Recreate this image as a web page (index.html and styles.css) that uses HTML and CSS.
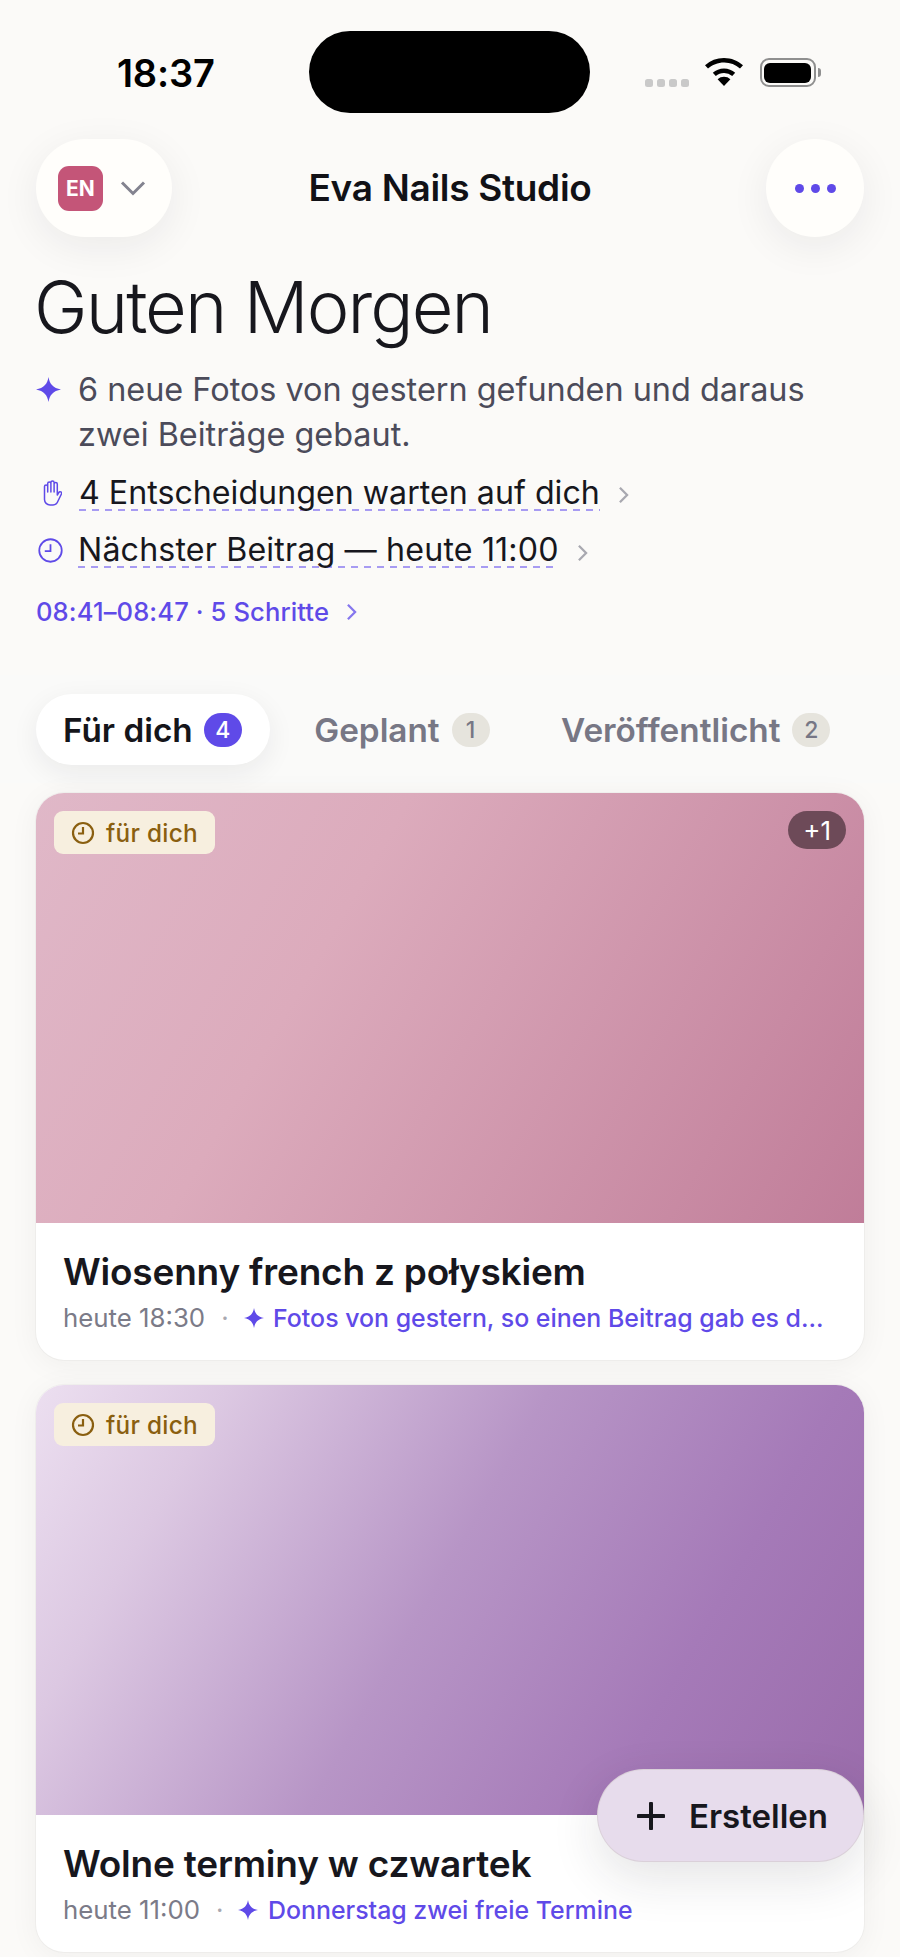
FILE: index.html
```html
<!DOCTYPE html>
<html lang="de">
<head>
<meta charset="utf-8">
<title>Eva Nails Studio</title>
<link rel="stylesheet" href="styles.css">
</head>
<body>
<div class="page">
  <div class="status">
    <span class="time">18:37</span>
    <div class="island"></div>
    <div class="status-right">
      <div class="signal"><i></i><i></i><i></i><i></i></div>
      <svg class="wifi" viewBox="0 0 38 28"><path d="M19 28 12.6 21.2a9.6 9.6 0 0 1 12.8 0Z"/><path d="M19 10.6c4.300 0 8.200 1.600 11.200 4.200l-3 3.200A12.300 12.300 0 0 0 19 14.900c-3.100 0-6 1.200-8.200 3.100l-3-3.200c3-2.600 6.900-4.200 11.200-4.200Z"/><path d="M19 0c7.300 0 14 2.800 19 7.300l-3 3.200A23.400 23.400 0 0 0 19 4.400c-6.100 0-11.800 2.300-16 6.100L0 7.300A28.300 28.300 0 0 1 19 0Z"/></svg>
      <div class="battery"><div class="battery-fill"></div></div>
      <div class="battery-cap"></div>
    </div>
  </div>

  <header class="topbar">
    <div class="topbar-left">
      <div class="lang">
        <span class="lang-badge">EN</span>
        <svg class="lang-chev" viewBox="0 0 26 16"><path d="M2 2.500 13 13.500 24 2.500"/></svg>
      </div>
    </div>
    <h2 class="brand">Eva Nails Studio</h2>
    <div class="topbar-right">
      <div class="more"><i></i><i></i><i></i></div>
    </div>
  </header>

  <section class="intro">
    <h1 class="greeting">Guten Morgen</h1>
    <div class="line line-lead">
      <svg class="ic-spark" viewBox="0 0 24 24"><path d="M12 0c1.100 6.800 4.500 10.600 12 12-7.500 1.400-10.900 5.200-12 12-1.100-6.800-4.500-10.600-12-12 7.500-1.400 10.900-5.200 12-12Z"/></svg>
      <p class="lead">6 neue Fotos von gestern gefunden und daraus zwei Beiträge gebaut.</p>
    </div>
    <div class="line line-link">
      <svg class="ic-hand" viewBox="0 0 20 26"><path d="M2.500 15V6.500a1.600 1.600 0 0 1 3.200 0V12M5.700 12V3.500a1.600 1.600 0 0 1 3.200 0V12M8.900 12V2.600a1.600 1.600 0 0 1 3.200 0V12M12.100 12V4a1.600 1.600 0 0 1 3.200 0v11l1.500-2.500a1.500 1.500 0 0 1 2.600 1.500L16 21a6 6 0 0 1-5 4H8a5.500 5.500 0 0 1-5.500-5.500V15"/></svg>
      <span class="link">4 Entscheidungen warten auf dich</span>
      <svg class="chev" viewBox="0 0 12 20"><path d="M2 2l8 8-8 8"/></svg>
    </div>
    <div class="line line-link line-next">
      <svg class="ic-clock" viewBox="0 0 24 24"><circle cx="12" cy="12" r="10.800"/><path d="M12 6v6.500H6.500"/></svg>
      <span class="link">Nächster Beitrag — heute 11:00</span>
      <svg class="chev" viewBox="0 0 12 20"><path d="M2 2l8 8-8 8"/></svg>
    </div>
    <div class="steps">
      <span>08:41–08:47 · 5 Schritte</span>
      <svg class="steps-chev" viewBox="0 0 12 20"><path d="M2 2l8 8-8 8"/></svg>
    </div>
  </section>

  <nav class="tabs">
    <div class="tab tab-active">Für dich <span class="count count-active">4</span></div>
    <div class="tab">Geplant <span class="count">1</span></div>
    <div class="tab">Veröffentlicht <span class="count">2</span></div>
  </nav>

  <main class="cards">
    <article class="card">
      <div class="media media-rose">
        <span class="tag"><svg viewBox="0 0 24 24"><circle cx="12" cy="12" r="10"/><path d="M12 6v6.500H7"/></svg>für dich</span>
        <span class="plus">+1</span>
      </div>
      <div class="body">
        <h3 class="title">Wiosenny french z połyskiem</h3>
        <div class="meta">
          <span class="when">heute 18:30</span>
          <span class="dot">·</span>
          <svg class="meta-spark" viewBox="0 0 24 24"><path d="M12 0c1.100 6.800 4.500 10.600 12 12-7.500 1.400-10.900 5.200-12 12-1.100-6.800-4.500-10.600-12-12 7.500-1.400 10.900-5.200 12-12Z"/></svg>
          <span class="why">Fotos von gestern, so einen Beitrag gab es d...</span>
        </div>
      </div>
    </article>
    <article class="card">
      <div class="media media-lilac">
        <span class="tag"><svg viewBox="0 0 24 24"><circle cx="12" cy="12" r="10"/><path d="M12 6v6.500H7"/></svg>für dich</span>
      </div>
      <div class="body">
        <h3 class="title">Wolne terminy w czwartek</h3>
        <div class="meta">
          <span class="when">heute 11:00</span>
          <span class="dot">·</span>
          <svg class="meta-spark" viewBox="0 0 24 24"><path d="M12 0c1.100 6.800 4.500 10.600 12 12-7.500 1.400-10.900 5.200-12 12-1.100-6.800-4.500-10.600-12-12 7.500-1.400 10.900-5.200 12-12Z"/></svg>
          <span class="why">Donnerstag zwei freie Termine</span>
        </div>
      </div>
    </article>
  </main>

  <button class="fab">
    <svg viewBox="0 0 28 28"><path d="M14 1.500v25M1.500 14h25"/></svg>
    <span>Erstellen</span>
  </button>
</div>
</body>
</html>
```

FILE: styles.css
```css
* { box-sizing: border-box; }
html, body { margin: 0; padding: 0; }
body {
  background: #fbfaf8;
  font-family: Inter, "Noto Sans", sans-serif;
  color: #17171d;
}
.page {
  position: relative;
  width: 900px;
  height: 1957px;
  overflow: hidden;
  background: #fbfaf8;
}

/* status bar */
.status {
  height: 139px;
  display: flex;
  align-items: flex-start;
  padding: 31px 0 0 117px;
}
.time {
  width: 192px;
  margin-top: 20px;
  font-size: 38px;
  line-height: 44px;
  font-weight: 600;
  letter-spacing: -0.2px;
  color: #000;
}
.island {
  width: 281px;
  height: 82px;
  border-radius: 41px;
  background: #000;
}
.status-right {
  display: flex;
  align-items: flex-start;
  margin-left: 55px;
  padding-top: 27px;
}
.signal {
  display: flex;
  gap: 4.500px;
  margin-top: 21px;
}
.signal i {
  width: 7.600px;
  height: 8px;
  border-radius: 2.500px;
  background: #c9c9c9;
}
.wifi {
  width: 38px;
  height: 28px;
  margin-left: 16px;
  fill: #000;
}
.battery {
  width: 56px;
  height: 29px;
  margin-left: 17px;
  border: 2px solid #8f8f8f;
  border-radius: 9px;
  padding: 2.500px;
}
.battery-fill {
  width: 100%;
  height: 100%;
  border-radius: 6px;
  background: #000;
}
.battery-cap {
  width: 3px;
  height: 9px;
  margin: 10px 0 0 2px;
  border-radius: 0 3px 3px 0;
  background: #8f8f8f;
}

/* header */
.topbar {
  height: 98px;
  padding: 0 36px;
  display: grid;
  grid-template-columns: 1fr auto 1fr;
  align-items: center;
}
.topbar-right {
  display: flex;
  justify-content: flex-end;
}
.lang {
  width: 136px;
  height: 98px;
  border-radius: 49px;
  background: #fffefb;
  box-shadow: 0 10px 40px rgba(30, 30, 40, 0.07);
  display: flex;
  align-items: center;
  padding-left: 22px;
}
.lang-badge {
  width: 45px;
  height: 45px;
  border-radius: 11px;
  background: #c45578;
  color: #fff;
  font-size: 21px;
  font-weight: 700;
  display: flex;
  align-items: center;
  justify-content: center;
}
.lang-chev {
  width: 26px;
  height: 16px;
  margin-left: 17px;
  fill: none;
  stroke: #83838f;
  stroke-width: 3;
}
.brand {
  margin: 0;
  font-size: 37px;
  line-height: 44px;
  font-weight: 600;
  letter-spacing: -0.3px;
  color: #111116;
}
.more {
  width: 98px;
  height: 98px;
  border-radius: 50%;
  background: #fffefb;
  box-shadow: 0 10px 40px rgba(30, 30, 40, 0.07);
  display: flex;
  align-items: center;
  justify-content: center;
  gap: 7px;
}
.more i {
  width: 9px;
  height: 9px;
  border-radius: 50%;
  background: #5f4ae8;
}

/* intro */
.intro {
  height: 413px;
  padding: 0 36px;
}
.greeting {
  margin: 25px 0 0 -2px;
  height: 90px;
  font-size: 72px;
  line-height: 90px;
  font-weight: 300;
  letter-spacing: -1.900px;
  color: #17171d;
}
.line {
  display: flex;
  align-items: center;
}
.line-lead {
  align-items: flex-start;
  margin-top: 15px;
}
.ic-spark {
  flex: none;
  width: 25px;
  height: 25px;
  margin: 10px 17px 0 0;
  fill: #5f4ae8;
}
.lead {
  margin: 0;
  width: 760px;
  font-size: 32.400px;
  line-height: 45px;
  color: #4b4b5a;
}
.line-link {
  margin-top: 14px;
  height: 44px;
  white-space: nowrap;
}
.line-next {
  margin-top: 13.500px;
}
.ic-hand {
  flex: none;
  width: 20px;
  height: 26px;
  margin: 0 17px 0 6px;
  fill: none;
  stroke: #5f4ae8;
  stroke-width: 1.500;
  stroke-linecap: round;
  stroke-linejoin: round;
}
.ic-clock {
  flex: none;
  width: 25px;
  height: 25px;
  margin: 0 15px 0 2px;
  fill: none;
  stroke: #5f4ae8;
  stroke-width: 1.700;
}
.link {
  font-size: 32.200px;
  line-height: 34px;
  color: #17171d;
  padding-bottom: 1px;
  background: repeating-linear-gradient(90deg, #a79bf2 0 7px, transparent 7px 13px) left bottom / 100% 2px no-repeat;
}
.line-next .link {
  letter-spacing: 0.15px;
}
.chev {
  width: 11px;
  height: 18px;
  margin: 4px 0 0 18px;
  fill: none;
  stroke: #a8a8b0;
  stroke-width: 2.500;
}
.steps {
  display: flex;
  align-items: center;
  margin-top: 23.500px;
  font-size: 25.600px;
  font-weight: 500;
  line-height: 32px;
  letter-spacing: 0.1px;
  color: #5f4ae8;
}
.steps-chev {
  width: 11px;
  height: 18px;
  margin-left: 17px;
  fill: none;
  stroke: #8576ee;
  stroke-width: 2.500;
}

/* tabs */
.tabs {
  height: 108px;
  background: #fafaf9;
  padding: 19px 36px 0;
  display: flex;
  align-items: flex-start;
  gap: 17.500px;
}
.tab {
  display: flex;
  align-items: center;
  gap: 12px;
  height: 71px;
  padding: 0 27px;
  font-size: 33.300px;
  font-weight: 600;
  color: #777785;
  white-space: nowrap;
}
.tab-active {
  gap: 11px;
  padding-right: 28px;
  border-radius: 36px;
  background: #fff;
  color: #15151a;
  box-shadow: 0 8px 28px rgba(30, 30, 40, 0.07);
}
.count {
  min-width: 38px;
  height: 34px;
  border-radius: 17px;
  background: #e6e4dd;
  color: #777785;
  font-size: 23px;
  font-weight: 500;
  display: flex;
  align-items: center;
  justify-content: center;
}
.count-active {
  background: #5f4ae8;
  color: #fff;
}

/* cards */
.cards {
  padding: 10px 36px 0;
  display: flex;
  flex-direction: column;
  gap: 25px;
}
.card {
  height: 567px;
  border-radius: 28px;
  background: #fff;
  overflow: hidden;
  box-shadow: 0 4px 30px rgba(40, 30, 30, 0.05), 0 0 0 1px rgba(40, 30, 30, 0.03);
}
.media {
  height: 430px;
  padding: 18px;
  display: flex;
  align-items: flex-start;
  justify-content: space-between;
}
.media-rose { background: linear-gradient(120deg, #e0b8c8 0%, #dcabbc 35%, #c07d99 100%); }
.media-lilac { background: linear-gradient(120deg, #ecdff0 0%, #dcc8e2 18%, #b795c6 48%, #a57ab8 75%, #9a6cab 100%); }
.tag {
  height: 43px;
  padding: 0 17px;
  border-radius: 9px;
  background: #f7efdf;
  color: #8a5f10;
  font-size: 24.300px;
  font-weight: 500;
  letter-spacing: 0.3px;
  display: flex;
  align-items: center;
  gap: 11px;
}
.tag svg {
  width: 24px;
  height: 24px;
  fill: none;
  stroke: #8a5f10;
  stroke-width: 2.200;
}
.plus {
  height: 38px;
  padding: 0 15px;
  border-radius: 19px;
  background: #6d4a58;
  color: #fff;
  font-size: 26px;
  font-weight: 400;
  display: flex;
  align-items: center;
}
.body {
  padding: 26px 27px 0;
}
.title {
  margin: 0;
  font-size: 37px;
  line-height: 46px;
  font-weight: 600;
  letter-spacing: -0.2px;
  color: #17171d;
}
.meta {
  display: flex;
  align-items: center;
  margin-top: 7px;
  font-size: 25.800px;
  line-height: 32px;
  white-space: nowrap;
}
.when { color: #7b7b88; }
.dot {
  margin: 0 15px 0 16px;
  color: #a8a8b0;
}
.meta-spark {
  flex: none;
  width: 20px;
  height: 20px;
  margin-right: 9.500px;
  fill: #5f4ae8;
}
.why {
  font-size: 24.900px;
  font-weight: 500;
  color: #5f4ae8;
}

/* floating button */
.fab {
  position: absolute;
  left: 597px;
  top: 1769px;
  width: 267px;
  height: 93px;
  border: 1px solid rgba(210, 200, 205, 0.6);
  border-radius: 47px;
  background: #e7dcec;
  box-shadow: 0 16px 50px rgba(30, 30, 40, 0.12);
  display: flex;
  align-items: center;
  padding: 0 0 0 39px;
  gap: 24px;
  font-family: inherit;
  font-size: 33px;
  font-weight: 600;
  color: #17171d;
}
.fab svg {
  width: 28px;
  height: 28px;
  fill: none;
  stroke: #17171d;
  stroke-width: 4;
  stroke-linecap: round;
}
```
